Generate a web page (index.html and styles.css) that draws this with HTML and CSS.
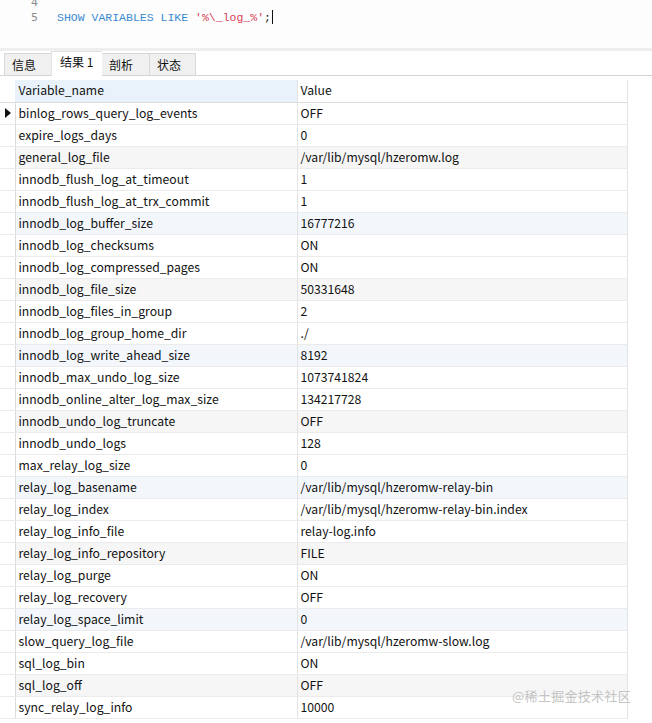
FILE: index.html
```html
<!DOCTYPE html>
<html>
<head>
<meta charset="utf-8">
<link rel="stylesheet" href="styles.css">
</head>
<body>
<div class="editor">
  <div class="lines">
    <div class="line"><span class="ln">4</span><span class="code"></span></div>
    <div class="line"><span class="ln">5</span><span class="code"><span class="kw">SHOW VARIABLES LIKE</span> <span class="str">'%\_log_%'</span>;<span class="caret"></span></span></div>
  </div>
</div>
<div class="sep"></div>
<div class="tabs">
  <div class="tab">信息</div>
  <div class="tab active">结果 1</div>
  <div class="tab">剖析</div>
  <div class="tab">状态</div>
</div>
<div class="gridwrap">
<table class="grid">
  <colgroup><col class="c0"><col class="c1"><col class="c2"></colgroup>
  <thead>
    <tr><th class="ind"></th><th class="hname">Variable_name</th><th>Value</th></tr>
  </thead>
  <tbody id="rows">
    <tr><td class="ind"><span class="tri"></span></td><td>binlog_rows_query_log_events</td><td>OFF</td></tr>
    <tr><td class="ind"></td><td>expire_logs_days</td><td>0</td></tr>
    <tr class="g"><td class="ind"></td><td>general_log_file</td><td>/var/lib/mysql/hzeromw.log</td></tr>
    <tr><td class="ind"></td><td>innodb_flush_log_at_timeout</td><td>1</td></tr>
    <tr><td class="ind"></td><td>innodb_flush_log_at_trx_commit</td><td>1</td></tr>
    <tr class="b"><td class="ind"></td><td>innodb_log_buffer_size</td><td>16777216</td></tr>
    <tr><td class="ind"></td><td>innodb_log_checksums</td><td>ON</td></tr>
    <tr><td class="ind"></td><td>innodb_log_compressed_pages</td><td>ON</td></tr>
    <tr class="g"><td class="ind"></td><td>innodb_log_file_size</td><td>50331648</td></tr>
    <tr><td class="ind"></td><td>innodb_log_files_in_group</td><td>2</td></tr>
    <tr><td class="ind"></td><td>innodb_log_group_home_dir</td><td>./</td></tr>
    <tr class="b"><td class="ind"></td><td>innodb_log_write_ahead_size</td><td>8192</td></tr>
    <tr><td class="ind"></td><td>innodb_max_undo_log_size</td><td>1073741824</td></tr>
    <tr><td class="ind"></td><td>innodb_online_alter_log_max_size</td><td>134217728</td></tr>
    <tr class="g"><td class="ind"></td><td>innodb_undo_log_truncate</td><td>OFF</td></tr>
    <tr><td class="ind"></td><td>innodb_undo_logs</td><td>128</td></tr>
    <tr><td class="ind"></td><td>max_relay_log_size</td><td>0</td></tr>
    <tr class="b"><td class="ind"></td><td>relay_log_basename</td><td>/var/lib/mysql/hzeromw-relay-bin</td></tr>
    <tr><td class="ind"></td><td>relay_log_index</td><td>/var/lib/mysql/hzeromw-relay-bin.index</td></tr>
    <tr><td class="ind"></td><td>relay_log_info_file</td><td>relay-log.info</td></tr>
    <tr class="g"><td class="ind"></td><td>relay_log_info_repository</td><td>FILE</td></tr>
    <tr><td class="ind"></td><td>relay_log_purge</td><td>ON</td></tr>
    <tr><td class="ind"></td><td>relay_log_recovery</td><td>OFF</td></tr>
    <tr class="b"><td class="ind"></td><td>relay_log_space_limit</td><td>0</td></tr>
    <tr><td class="ind"></td><td>slow_query_log_file</td><td>/var/lib/mysql/hzeromw-slow.log</td></tr>
    <tr><td class="ind"></td><td>sql_log_bin</td><td>ON</td></tr>
    <tr class="g"><td class="ind"></td><td>sql_log_off</td><td>OFF</td></tr>
    <tr><td class="ind"></td><td>sync_relay_log_info</td><td>10000</td></tr>
  </tbody>
</table>
</div>
<div class="watermark">@稀土掘金技术社区</div>
</body>
</html>
```

FILE: styles.css
```css
html, body {
  margin: 0;
  padding: 0;
  background: #ffffff;
}
body {
  width: 652px;
  height: 723px;
  overflow: hidden;
  position: relative;
  font-family: "Noto Sans CJK SC", "Noto Sans", sans-serif;
}
.editor {
  height: 48px;
  background: #fdfdfd;
  overflow: hidden;
}
.lines {
  margin-top: -5px;
}
.line {
  display: flex;
  height: 15px;
  line-height: 15px;
  font-family: "Liberation Mono", "DejaVu Sans Mono", monospace;
  font-size: 11.5px;
}
.ln {
  width: 38px;
  text-align: right;
  color: #8a8a8a;
  font-family: "DejaVu Sans", sans-serif;
  font-size: 11px;
}
.code {
  display: block;
  margin-left: 19px;
  color: #222;
  white-space: pre;
}
.kw { color: #3b8ad2; }
.str { color: #d8425a; }
.caret {
  display: inline-block;
  width: 1px;
  height: 14px;
  background: #111;
  margin-left: 1px;
  vertical-align: -3px;
}
.sep {
  height: 3px;
  background: #eeeeee;
}
.tabs {
  display: flex;
  height: 24px;
  padding-left: 4px;
  border-bottom: 1px solid #d4d4d4;
  align-items: flex-end;
  background: #ffffff;
}
.tab {
  height: 22px;
  box-sizing: border-box;
  background: #f0f0f0;
  border: 1px solid #d9d9d9;
  border-bottom: none;
  border-right: none;
  font-size: 12px;
  line-height: 22px;
  padding: 0 7px;
  color: #111;
  width: 47px;
}
.tab:last-child { border-right: 1px solid #d9d9d9; }
.tab.active {
  background: #ffffff;
  height: 25px;
  line-height: 20px;
  width: 51px;
  border-color: #e2e2e2;
  padding-left: 8px;
  margin-bottom: -1px;
}
.tab.active + .tab { border-left: none; }
.gridwrap {
  padding-top: 4px;
}
.grid {
  border-collapse: collapse;
  table-layout: fixed;
  width: 627px;
  font-size: 12.2px;
  color: #111;
}
.c0 { width: 15px; }
.c1 { width: 282px; }
.c2 { width: 330px; }
.grid th, .grid td {
  height: 22px;
  padding: 0 0 1px 3px;
  box-sizing: border-box;
  text-align: left;
  font-weight: normal;
  white-space: nowrap;
  overflow: hidden;
  border-right: 1px solid #e3e3e3;
  border-bottom: 1px solid #ebebeb;
  line-height: 20px;
}
.grid th {
  border-bottom: 1px solid #dcdcdc;
}
.grid th.hname {
  background: #e9f2fb;
}
.grid .ind {
  padding: 0;
  border-right: 1px solid #dcdcdc;
  background: #ffffff;
  position: relative;
}
.grid th.ind {
  border-right-color: #e9f2fb;
}
.grid tr.g td { background: #f6f6f6; }
.grid tr.b td { background: #f3f7fc; }
.grid tr td.ind { background: #ffffff; }
.tri {
  display: block;
  width: 0;
  height: 0;
  margin-left: 5px;
  border-top: 5px solid transparent;
  border-bottom: 5px solid transparent;
  border-left: 6px solid #111;
}
.watermark {
  position: absolute;
  left: 512px;
  top: 686px;
  font-size: 13px;
  color: #c4c4c4;
  letter-spacing: 0.3px;
}
```
